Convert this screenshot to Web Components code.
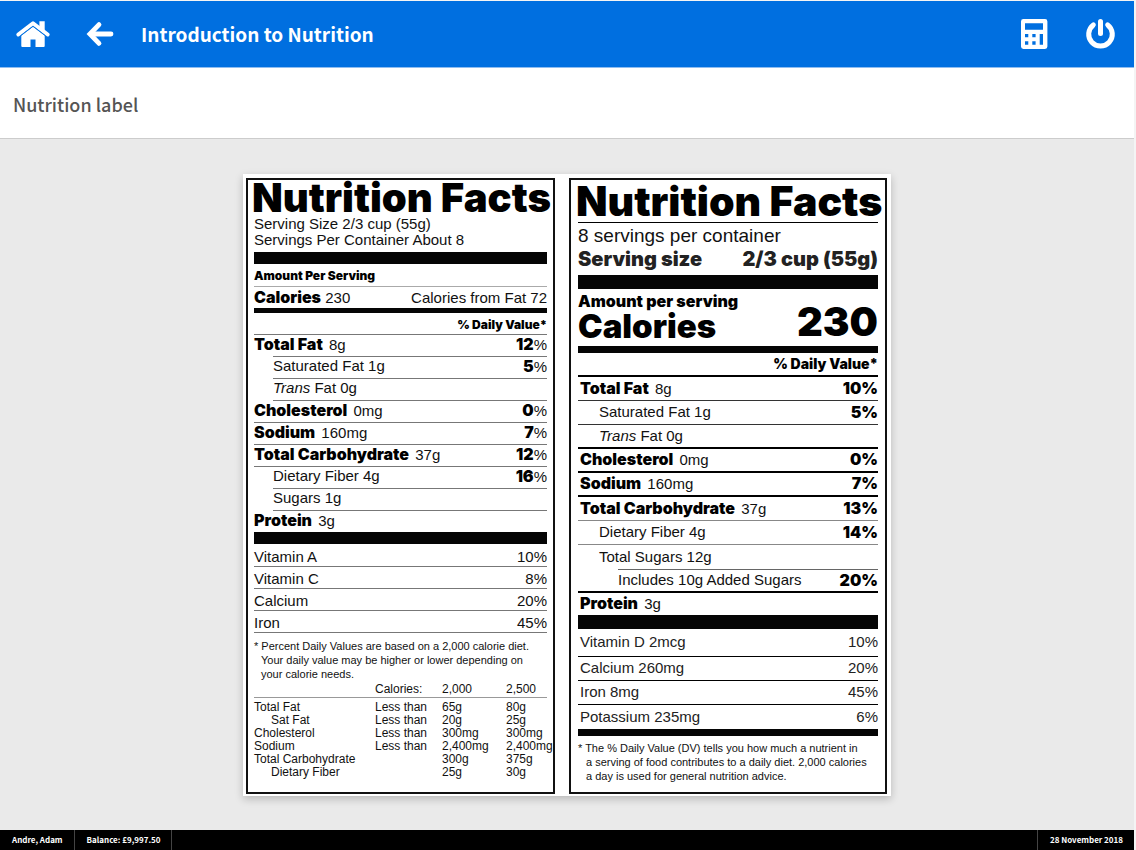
<!DOCTYPE html>
<html lang="en">
<head>
<meta charset="utf-8">
<title>Introduction to Nutrition</title>
<style>
  html { background: #f4f4f4; }
  body {
    margin: 0;
    padding: 1px 2px 0 0;
    box-sizing: border-box;
    min-height: 100vh;
    display: flex;
    flex-direction: column;
    font-family: "Noto Sans CJK SC", "Noto Sans", sans-serif;
  }
  lesson-stage { flex: 1; }
</style>
</head>
<body>
<app-header>Introduction to Nutrition</app-header>
<page-heading>Nutrition label</page-heading>
<lesson-stage>
  <label-original></label-original>
  <label-updated></label-updated>
</lesson-stage>
<status-bar>
  <span>Andre, Adam</span>
  <span>Balance: £9,997.50</span>
  <span slot="end">28 November 2018</span>
</status-bar>

<script>
function define(name, html) {
  const template = document.createElement('template');
  template.innerHTML = html;
  customElements.define(name, class extends HTMLElement {
    constructor() {
      super();
      this.attachShadow({ mode: 'open' }).append(template.content.cloneNode(true));
    }
  });
}

define('app-header', `
<style>
  :host { display: block; }
  header {
    display: flex; align-items: center; height: 66px; padding: 0 18px 0 16px;
    background: #006fe0; border-bottom: 1px solid #8fbdf0; color: #fff;
  }
  nav { display: flex; align-items: center; }
  .start { gap: 36px; }
  .end { gap: 37px; margin-left: auto; }
  a, button { display: block; padding: 0; border: 0; background: none; color: inherit; cursor: pointer; }
  svg { display: block; }
  h1 { margin: 0 0 0 27px; font-size: 19px; font-weight: 700; line-height: 28px; }
</style>
<header>
  <nav class="start">
    <a href="#home" aria-label="Home">
      <svg width="34" height="26" viewBox="0 0 34 26" fill="#fff">
        <path d="M23.4 0.300h5.300v11.500l-5.300-4z"/>
        <path d="M2.300 13.600L17 2.300l14.700 11.300" fill="none" stroke="#fff" stroke-width="3.800" stroke-linecap="round" stroke-linejoin="round"/>
        <path d="M17 5.600l11.700 9V25a1 1 0 0 1-1 1H19.500v-7.600h-5V26H6.300a1 1 0 0 1-1-1V14.600z"/>
        <path d="M4.600 14.800L17 5.400l12.400 9.400" fill="none" stroke="#006fe0" stroke-width="0.900"/>
      </svg>
    </a>
    <a href="#back" aria-label="Back">
      <svg width="28" height="26" viewBox="0 0 28 26" fill="none" stroke="#fff" stroke-width="4.800">
        <path d="M13 3.600L3.900 13l9.100 9.400" stroke-linecap="round"/>
        <path d="M5 13h20" stroke-linecap="round"/>
      </svg>
    </a>
  </nav>
  <h1><slot></slot></h1>
  <nav class="end">
    <button type="button" aria-label="Calculator">
      <svg width="27" height="30" viewBox="0 0 27 30" fill="#fff">
        <path fill-rule="evenodd" d="M2.400 0h21.600a2.400 2.400 0 0 1 2.400 2.400v25.200a2.400 2.400 0 0 1-2.400 2.400H2.400A2.400 2.400 0 0 1 0 27.600V2.400A2.400 2.400 0 0 1 2.400 0zM4 4.300v6.400h18V4.300zM4 15v3.300h3.300V15zM11.300 15v3.300h3.300V15zM18.700 15v10.700H22V15zM4 22.300v3.400h3.300v-3.400zM11.300 22.300v3.400h3.300v-3.400z"/>
      </svg>
    </button>
    <button type="button" aria-label="Log out">
      <svg width="31" height="30" viewBox="0 0 31 30" fill="none" stroke="#fff" stroke-width="5" stroke-linecap="round">
        <path d="M8.300 5.900a11.800 11.800 0 1 0 14.400 0"/>
        <path d="M15.500 2.500v12"/>
      </svg>
    </button>
  </nav>
</header>`);

define('page-heading', `
<style>
  :host { display: block; background: #fff; border-bottom: 1px solid #ccc; }
  h2 { margin: 0; padding: 24px 13px 21px; font-size: 18px; font-weight: 500; line-height: 25px; color: #555; }
</style>
<h2><slot></slot></h2>`);

define('lesson-stage', `
<style>
  :host { display: flex; align-items: center; justify-content: center; background: #eaeaea; }
  figure {
    display: flex; gap: 14px; margin: 0; padding: 4px 4px 2px 3px; background: #fff;
    box-shadow: 0 3px 8px rgba(0, 0, 0, .22);
  }
</style>
<figure><slot></slot></figure>`);

define('status-bar', `
<style>
  :host { display: flex; background: #000; color: #fff; font-size: 8px; font-weight: 700; line-height: 20px; }
  ::slotted(span) { padding: 0 11px 0 12px; border-right: 1px solid #444; }
  ::slotted([slot=end]) { border-right: 0; border-left: 1px solid #444; }
  .end { margin-left: auto; display: flex; }
</style>
<slot></slot><div class="end"><slot name="end"></slot></div>`);

const labelStyle = `
  :host {
    display: block; box-sizing: border-box; border: 2px solid #111; background: #fff;
    color: #111; font: 15px/16px "Liberation Sans", Arial, sans-serif;
  }
  b, h3, .heavy { font-family: Inter, "Liberation Sans", sans-serif; font-weight: 900; color: #000; }
  b { font-size: 16px; }
  th b { margin-right: 2px; }
  h3, p { margin: 0; }
  h3 { white-space: nowrap; }
  table { width: 100%; border-collapse: separate; border-spacing: 0; }
  th, td { box-sizing: border-box; padding: 0; text-align: left; font-weight: 400; white-space: nowrap; }
  .rows td, .rows th { height: var(--row); border-bottom: 1px solid var(--rule); }
  .rows td:last-child, .rows .dv { text-align: right; }
  .rows .off { border-bottom-color: transparent; }
  .rows .none > * { border-bottom: 0; }
  .bar { background: #050505; }
  .split { display: flex; justify-content: space-between; }
  .note { font-size: 11px; line-height: 14px; white-space: nowrap; }
`;

define('label-original', `
<style>
  ${labelStyle}
  :host { width: 309px; padding: 0 6px; --row: 22px; --rule: #777; }
  h3 { font-size: 40px; line-height: 36px; margin-left: -2px; }
  .bar { height: 12px; }
  .thin { height: 5px; }
  .amount { font-size: 12px; line-height: 20px; padding-top: 2px; border-bottom: 1px solid #aaa; }
  .calories { line-height: 21px; }
  .facts th, .facts td { padding-bottom: 2px; }
  .facts .dv { font-size: 12px; padding: 3px 0 0; }
  .facts .clip > * { height: 21px; border-bottom: 0; }
  .facts .over > :not(.in) { height: 23px; border-top: 1px solid var(--rule); }
  .facts .last > * { height: 21px; }
  .in { width: 19px; }
  .vitamins td, .vitamins th { padding-top: 3px; }
  .vitamins tr:first-child > * { height: 23px; padding-top: 5px; }
  .note { padding: 6px 0 0 7px; text-indent: -7px; }
  .guide { table-layout: fixed; font-size: 12px; line-height: 13px; }
  .guide thead th { height: 17px; padding-top: 2px; border-bottom: 1px solid #999; }
  .guide tbody tr:first-child > * { padding-top: 3px; }
  .guide .sub { padding-left: 17px; }
</style>
<h3>Nutrition Facts</h3>
<p>Serving Size 2/3 cup (55g)</p>
<p>Servings Per Container About 8</p>
<div class="bar" style="margin-top:4px"></div>
<p class="heavy amount">Amount Per Serving</p>
<p class="split calories"><span><b>Calories</b> 230</span><span>Calories from Fat 72</span></p>
<div class="bar thin"></div>
<table class="rows facts">
  <tr><th colspan="3" class="heavy dv">% Daily Value*</th></tr>
  <tr class="clip"><th colspan="2"><b>Total Fat</b> 8g</th><td><b>12</b>%</td></tr>
  <tr class="over"><td class="in off"></td><th>Saturated Fat 1g</th><td><b>5</b>%</td></tr>
  <tr><td class="in off"></td><th><i>Trans</i> Fat 0g</th><td></td></tr>
  <tr><th colspan="2"><b>Cholesterol</b> 0mg</th><td><b>0</b>%</td></tr>
  <tr><th colspan="2"><b>Sodium</b> 160mg</th><td><b>7</b>%</td></tr>
  <tr><th colspan="2"><b>Total Carbohydrate</b> 37g</th><td><b>12</b>%</td></tr>
  <tr><td class="in off"></td><th>Dietary Fiber 4g</th><td><b>16</b>%</td></tr>
  <tr><td class="in off"></td><th>Sugars 1g</th><td></td></tr>
  <tr class="none last"><th colspan="2"><b>Protein</b> 3g</th><td></td></tr>
</table>
<div class="bar"></div>
<table class="rows vitamins">
  <tr><th>Vitamin A</th><td>10%</td></tr>
  <tr><th>Vitamin C</th><td>8%</td></tr>
  <tr><th>Calcium</th><td>20%</td></tr>
  <tr><th>Iron</th><td>45%</td></tr>
</table>
<p class="note">* Percent Daily Values are based on a 2,000 calorie diet.<br>Your daily value may be higher or lower depending on<br>your calorie needs.</p>
<table class="guide">
  <colgroup><col style="width:121px"><col style="width:67px"><col style="width:64px"><col></colgroup>
  <thead><tr><th></th><th>Calories:</th><th>2,000</th><th>2,500</th></tr></thead>
  <tbody>
    <tr><th>Total Fat</th><td>Less than</td><td>65g</td><td>80g</td></tr>
    <tr><th class="sub">Sat Fat</th><td>Less than</td><td>20g</td><td>25g</td></tr>
    <tr><th>Cholesterol</th><td>Less than</td><td>300mg</td><td>300mg</td></tr>
    <tr><th>Sodium</th><td>Less than</td><td>2,400mg</td><td>2,400mg</td></tr>
    <tr><th>Total Carbohydrate</th><td></td><td>300g</td><td>375g</td></tr>
    <tr><th class="sub">Dietary Fiber</th><td></td><td>25g</td><td>30g</td></tr>
  </tbody>
</table>`);

define('label-updated', `
<style>
  ${labelStyle}
  :host { width: 318px; padding: 0 7px 9px; --row: 24px; --rule: #333; }
  h3 { font-size: 41px; line-height: 42px; margin-left: -2px; }
  .servings { font-size: 19px; line-height: 26px; border-top: 1px solid #000; }
  .size { font-size: 20px; line-height: 20px; color: #222; }
  .bar { height: 14px; }
  .mid { height: 7px; }
  .energy { align-items: flex-end; padding-bottom: 7px; }
  .amount { font-size: 16px; line-height: 24px; }
  .word { font-size: 33px; line-height: 26px; }
  .count { font-size: 40px; line-height: 34px; }
  .dv { font-size: 14px; }
  .rows th:first-child { padding-left: 2px; }
  .rows .thick > * { border-bottom: 2px solid #000; }
  .rows .soft > * { border-bottom-color: #888; }
  .rows .sub:first-child { padding-left: 21px; }
  .in { width: 40px; }
  .added > :not(.in) { border-top: 1px solid #666; }
  .facts .last > * { height: 22px; }
  .vitamins { --rule: #000; color: #222; }
  .vitamins tr:first-child > * { height: 28px; }
  .note { padding: 5px 0 0 8px; text-indent: -8px; }
</style>
<h3>Nutrition Facts</h3>
<p class="servings">8 servings per container</p>
<p class="heavy split size"><span>Serving size</span><span>2/3 cup (55g)</span></p>
<div class="bar" style="margin-top:6px"></div>
<div class="heavy split energy">
  <div><p class="amount">Amount per serving</p><p class="word">Calories</p></div>
  <span class="count">230</span>
</div>
<div class="bar mid"></div>
<table class="rows facts">
  <tr class="thick"><th colspan="3" class="heavy dv">% Daily Value*</th></tr>
  <tr><th colspan="2"><b>Total Fat</b> 8g</th><td><b>10%</b></td></tr>
  <tr><th colspan="2" class="sub">Saturated Fat 1g</th><td><b>5%</b></td></tr>
  <tr class="thick"><th colspan="2" class="sub"><i>Trans</i> Fat 0g</th><td></td></tr>
  <tr class="thick"><th colspan="2"><b>Cholesterol</b> 0mg</th><td><b>0%</b></td></tr>
  <tr class="thick"><th colspan="2"><b>Sodium</b> 160mg</th><td><b>7%</b></td></tr>
  <tr class="soft"><th colspan="2"><b>Total Carbohydrate</b> 37g</th><td><b>13%</b></td></tr>
  <tr class="soft"><th colspan="2" class="sub">Dietary Fiber 4g</th><td><b>14%</b></td></tr>
  <tr class="none"><th colspan="2" class="sub">Total Sugars 12g</th><td></td></tr>
  <tr class="thick added"><td class="in"></td><th>Includes 10g Added Sugars</th><td><b>20%</b></td></tr>
  <tr class="none last"><th colspan="2"><b>Protein</b> 3g</th><td></td></tr>
</table>
<div class="bar"></div>
<table class="rows vitamins">
  <tr><th>Vitamin D 2mcg</th><td>10%</td></tr>
  <tr><th>Calcium 260mg</th><td>20%</td></tr>
  <tr><th>Iron 8mg</th><td>45%</td></tr>
  <tr class="none"><th>Potassium 235mg</th><td>6%</td></tr>
</table>
<div class="bar mid"></div>
<p class="note">* The % Daily Value (DV) tells you how much a nutrient in<br>a serving of food contributes to a daily diet. 2,000 calories<br>a day is used for general nutrition advice.</p>`);
</script>
</body>
</html>
